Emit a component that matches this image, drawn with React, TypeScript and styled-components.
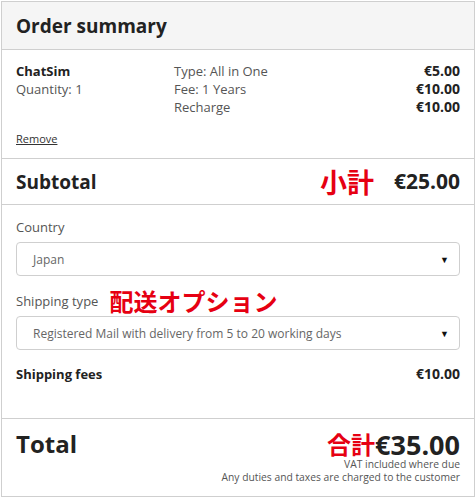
import React from 'react';
import styled, { createGlobalStyle } from 'styled-components';

const GlobalStyle = createGlobalStyle`
  html, body {
    margin: 0;
    padding: 0;
    background: #ffffff;
    font-family: 'Open Sans', 'Noto Sans', sans-serif;
    color: #222222;
  }
`;

const lineItems = [
  { detail: 'Type: All in One', price: '€5.00' },
  { detail: 'Fee: 1 Years', price: '€10.00' },
  { detail: 'Recharge', price: '€10.00' },
];

const App = () => {
  return (
    <>
      <GlobalStyle />
      <SummaryWrapper>
        <Header>Order summary</Header>

        <ItemSection>
          <div className='itemName'>
            <div className='productName'>ChatSim</div>
            <div className='quantity'>Quantity: 1</div>
          </div>
          <div className='itemDetails'>
            {lineItems.map((item) => (
              <div className='detailRow' key={item.detail}>
                <span>{item.detail}</span>
                <Price>{item.price}</Price>
              </div>
            ))}
          </div>
          <RemoveLink href='#'>Remove</RemoveLink>
        </ItemSection>

        <TotalRow>
          <span className='rowTitle'>Subtotal</span>
          <div className='rowRight'>
            <Note $size={27}>小計</Note>
            <Amount $size={21}>€25.00</Amount>
          </div>
        </TotalRow>

        <ShippingSection>
          <FieldLabel>Country</FieldLabel>
          <SelectBox>
            <span>Japan</span>
            <Arrow>▼</Arrow>
          </SelectBox>

          <FieldLabel>
            Shipping type
            <Note $size={24}>配送オプション</Note>
          </FieldLabel>
          <SelectBox>
            <span>Registered Mail with delivery from 5 to 20 working days</span>
            <Arrow>▼</Arrow>
          </SelectBox>

          <FeesRow>
            <span>Shipping fees</span>
            <Price>€10.00</Price>
          </FeesRow>
        </ShippingSection>

        <GrandTotal>
          <div className='totalLine'>
            <span className='rowTitle'>Total</span>
            <div className='rowRight'>
              <Note $size={24}>合計</Note>
              <Amount $size={27}>€35.00</Amount>
            </div>
          </div>
          <SmallPrint>VAT included where due</SmallPrint>
          <SmallPrint>Any duties and taxes are charged to the customer</SmallPrint>
        </GrandTotal>
      </SummaryWrapper>
    </>
  );
};

export default App;

const SummaryWrapper = styled.div`
  box-sizing: border-box;
  width: 474px;
  height: 496px;
  margin: 1px 0 0 1px;
  border: 1px solid #cfcfcf;
  background: #ffffff;
  display: flex;
  flex-direction: column;
`;

const Header = styled.div`
  height: 47px;
  flex-shrink: 0;
  padding: 0 14px;
  display: flex;
  align-items: center;
  background: #f5f5f5;
  border-bottom: 1px solid #cfcfcf;
  font-size: 19px;
  font-weight: 700;
  color: #222222;
`;

const ItemSection = styled.div`
  height: 109px;
  flex-shrink: 0;
  box-sizing: border-box;
  padding: 12px 14px 0;
  border-bottom: 1px solid #cfcfcf;
  display: grid;
  grid-template-columns: 158px 1fr;
  grid-template-rows: 70px auto;
  font-size: 13px;
  line-height: 18px;

  .productName {
    font-weight: 700;
    color: #222222;
  }

  .quantity {
    color: #555555;
  }

  .itemDetails {
    display: flex;
    flex-direction: column;
    color: #555555;
  }

  .detailRow {
    display: flex;
    justify-content: space-between;
    align-items: baseline;
  }
`;

const Price = styled.span`
  font-weight: 700;
  color: #222222;
  font-size: 14px;
`;

const RemoveLink = styled.a`
  grid-column: 1 / 2;
  align-self: start;
  font-size: 11px;
  line-height: 14px;
  color: #333333;
  text-decoration: underline;
`;

const TotalRow = styled.div`
  box-sizing: border-box;
  height: 46px;
  flex-shrink: 0;
  padding: 0 14px;
  display: flex;
  align-items: center;
  justify-content: space-between;
  border-bottom: 1px solid #cfcfcf;

  .rowTitle {
    font-size: 19px;
    font-weight: 700;
  }

  .rowRight {
    display: flex;
    align-items: center;
    gap: 20px;
  }
`;

const Note = styled.span<{ $size: number }>`
  font-family: 'Noto Sans CJK JP', sans-serif;
  font-size: ${({ $size }) => $size}px;
  font-weight: 700;
  color: #e60012;
  line-height: 1;
`;

const Amount = styled.span<{ $size: number }>`
  font-size: ${({ $size }) => $size}px;
  font-weight: 700;
  line-height: 1;
  color: #222222;
`;

const ShippingSection = styled.div`
  box-sizing: border-box;
  height: 214px;
  flex-shrink: 0;
  padding: 10px 14px 0;
  border-bottom: 1px solid #cfcfcf;
  display: flex;
  flex-direction: column;
`;

const FieldLabel = styled.div`
  height: 24px;
  display: flex;
  align-items: center;
  gap: 11px;
  font-size: 13px;
  color: #555555;
  margin-bottom: 3px;
`;

const SelectBox = styled.div`
  box-sizing: border-box;
  height: 34px;
  margin-bottom: 13px;
  padding: 0 10px 0 16px;
  border: 1px solid #cfcfcf;
  border-radius: 4px;
  display: flex;
  align-items: center;
  justify-content: space-between;
  font-size: 12px;
  color: #666666;
`;

const Arrow = styled.span`
  font-size: 9px;
  color: #111111;
`;

const FeesRow = styled.div`
  display: flex;
  justify-content: space-between;
  align-items: center;
  line-height: 18px;
  margin-top: 2px;
  font-size: 13px;
  font-weight: 700;
`;

const GrandTotal = styled.div`
  flex: 1;
  padding: 11px 14px 0;
  display: flex;
  flex-direction: column;

  .totalLine {
    height: 28px;
    display: flex;
    justify-content: space-between;
    align-items: center;
  }

  .rowTitle {
    font-size: 24px;
    font-weight: 700;
    line-height: 1;
  }

  .rowRight {
    display: flex;
    align-items: center;
  }
`;

const SmallPrint = styled.div`
  text-align: right;
  font-size: 10.3px;
  line-height: 13px;
  color: #555555;
`;
